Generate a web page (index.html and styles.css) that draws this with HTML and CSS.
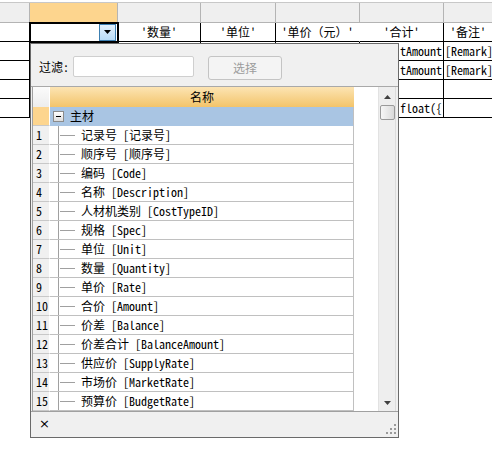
FILE: index.html
```html
<!DOCTYPE html>
<html>
<head>
<meta charset="utf-8">
<link rel="stylesheet" href="styles.css">
</head>
<body>
<div class="page">
  <div class="sheet">
    <div class="hc"></div><div class="hc hsel"></div><div class="hc"></div><div class="hc"></div><div class="hc"></div><div class="hc"></div><div class="hc"></div>

    <div class="r1 r1-first"></div>
    <div class="r1 cur"><span class="dd"><svg width="7" height="4" viewBox="0 0 7 4"><path d="M0 0H7L3.5 4Z" fill="#000"/></svg></span></div>
    <div class="r1">'数量'</div>
    <div class="r1">'单位'</div>
    <div class="r1 soft">'单价（元）'</div>
    <div class="r1">'合计'</div>
    <div class="r1">'备注'</div>

    <div class="c"></div><div class="c"></div><div class="c"></div><div class="c"></div><div class="c"></div><div class="c rt">tAmount</div><div class="c lt">[Remark]</div>
    <div class="c"></div><div class="c"></div><div class="c"></div><div class="c"></div><div class="c"></div><div class="c rt">tAmount</div><div class="c lt">[Remark]</div>
    <div class="c"></div><div class="c"></div><div class="c"></div><div class="c"></div><div class="c"></div><div class="c rt"></div><div class="c lt"></div>
    <div class="c"></div><div class="c"></div><div class="c"></div><div class="c"></div><div class="c"></div><div class="c rt">float({</div><div class="c lt"></div>
  </div>

  <div class="popup">
    <div class="filter">
      <span class="flabel">过滤:</span>
      <span class="finput"></span>
      <span class="fbtn">选择</span>
    </div>
    <div class="grid">
      <div class="cols">
        <div class="row head"><div class="rh rh-head"></div><div class="dc dc-head">名称</div></div>
        <div class="row group"><div class="rh rh-group"></div><div class="dc dc-group"><span class="minus"></span><span class="gtext">主材</span></div></div>
        <div class="row"><div class="rh">1</div><div class="dc"><span class="tree"></span>记录号 [记录号]</div></div>
        <div class="row"><div class="rh">2</div><div class="dc"><span class="tree"></span>顺序号 [顺序号]</div></div>
        <div class="row"><div class="rh">3</div><div class="dc"><span class="tree"></span>编码 [Code]</div></div>
        <div class="row"><div class="rh">4</div><div class="dc"><span class="tree"></span>名称 [Description]</div></div>
        <div class="row"><div class="rh">5</div><div class="dc"><span class="tree"></span>人材机类别 [CostTypeID]</div></div>
        <div class="row"><div class="rh">6</div><div class="dc"><span class="tree"></span>规格 [Spec]</div></div>
        <div class="row"><div class="rh">7</div><div class="dc"><span class="tree"></span>单位 [Unit]</div></div>
        <div class="row"><div class="rh">8</div><div class="dc"><span class="tree"></span>数量 [Quantity]</div></div>
        <div class="row"><div class="rh">9</div><div class="dc"><span class="tree"></span>单价 [Rate]</div></div>
        <div class="row"><div class="rh">10</div><div class="dc"><span class="tree"></span>合价 [Amount]</div></div>
        <div class="row"><div class="rh">11</div><div class="dc"><span class="tree"></span>价差 [Balance]</div></div>
        <div class="row"><div class="rh">12</div><div class="dc"><span class="tree"></span>价差合计 [BalanceAmount]</div></div>
        <div class="row"><div class="rh">13</div><div class="dc"><span class="tree"></span>供应价 [SupplyRate]</div></div>
        <div class="row"><div class="rh">14</div><div class="dc"><span class="tree"></span>市场价 [MarketRate]</div></div>
        <div class="row"><div class="rh">15</div><div class="dc"><span class="tree"></span>预算价 [BudgetRate]</div></div>
      </div>
      <div class="filler"></div>
      <div class="vscroll">
        <svg class="arr" width="7" height="4" viewBox="0 0 7 4"><path d="M3.5 0L7 4H0Z" fill="#404040"/></svg>
        <span class="thumb"></span>
        <span class="track"></span>
        <svg class="arr" width="7" height="4" viewBox="0 0 7 4"><path d="M0 0H7L3.5 4Z" fill="#404040"/></svg>
      </div>
    </div>
    <div class="footer">
      <span class="close">×</span>
      <svg class="grip" width="10" height="10" viewBox="0 0 10 10">
        <rect x="8" y="0" width="2" height="2" fill="#9a9a9a"/>
        <rect x="4" y="4" width="2" height="2" fill="#9a9a9a"/>
        <rect x="8" y="4" width="2" height="2" fill="#9a9a9a"/>
        <rect x="0" y="8" width="2" height="2" fill="#9a9a9a"/>
        <rect x="4" y="8" width="2" height="2" fill="#9a9a9a"/>
        <rect x="8" y="8" width="2" height="2" fill="#9a9a9a"/>
      </svg>
    </div>
  </div>
</div>
</body>
</html>
```

FILE: styles.css
```css
html, body {
  margin: 0;
  padding: 0;
  background: #fff;
}
body {
  width: 492px;
  height: 453px;
  overflow: hidden;
  font-family: "Noto Sans Mono CJK SC", "Noto Sans CJK SC", monospace;
  font-size: 12px;
  color: #000;
}
.page {
  position: relative;
  width: 492px;
  height: 453px;
}
.sheet {
  display: grid;
  grid-template-columns: 30px 88px 83px 75px 84px 84px 49px;
  grid-template-rows: 20px 19px 19px 19px 19px 19px;
  margin-top: 2px;
  border-top: 1px solid #c8c8c8;
  width: 493px;
}
.sheet > div {
  box-sizing: border-box;
  white-space: nowrap;
  overflow: hidden;
  line-height: 18px;
}
.hc {
  background: #efefef;
  border-right: 1px solid #b4b4b4;
  border-bottom: 1px solid #b4b4b4;
}
.hc.hsel {
  background: #fdd58e;
}
.r1 {
  border-right: 1px solid #000;
  border-bottom: 1px solid #000;
  text-align: center;
}
.r1.r1-first {
  border-right: none;
}
.r1.soft {
  border-right-color: #fff;
}
.r1.cur {
  position: relative;
  z-index: 1;
  outline: 2px solid #000;
  outline-offset: -1px;
  display: flex;
  justify-content: flex-end;
  align-items: center;
}
.dd {
  width: 15px;
  height: 15px;
  margin-right: 1px;
  border: 1px solid #3c7fb1;
  background: linear-gradient(#e4f1fc, #b9dbf6);
  display: flex;
  align-items: center;
  justify-content: center;
}
.c {
  border-right: 1px solid #000;
  border-bottom: 1px solid #000;
}
.c.rt {
  text-align: right;
  padding-right: 1px;
}
.c.lt {
  padding-left: 1px;
}

.popup {
  position: absolute;
  left: 30px;
  top: 41px;
  width: 367px;
  height: 393px;
  border: 1px solid #6a6a6a;
  background: #f0f0f0;
  z-index: 2;
  display: flex;
  flex-direction: column;
}
.filter {
  box-sizing: border-box;
  height: 43px;
  border-bottom: 1px solid #a9a9a9;
  display: flex;
  align-items: flex-start;
  padding: 12px 0 0 8px;
}
.flabel {
  line-height: 21px;
  width: 34px;
}
.finput {
  box-sizing: border-box;
  width: 121px;
  height: 21px;
  background: #fff;
  border: 1px solid #cfcfcf;
  border-radius: 2px;
}
.fbtn {
  box-sizing: border-box;
  margin-left: 14px;
  width: 74px;
  height: 24px;
  border: 1px solid #c4c4c4;
  border-radius: 3px;
  background: #f4f4f4;
  color: #9c9c9c;
  text-align: center;
  line-height: 22px;
}
.grid {
  margin-left: 1px;
  width: 364px;
  height: 324px;
  box-sizing: border-box;
  border-left: 1px solid #a0a0a0;
  border-right: 1px solid #dcdcdc;
  background: #fff;
  display: flex;
}
.cols {
  width: 321px;
  display: flex;
  flex-direction: column;
}
.row {
  display: grid;
  grid-template-columns: 17px 304px;
  height: 19px;
}
.row.head {
  height: 20px;
}
.rh {
  box-sizing: border-box;
  background: #f0f0f0;
  border-right: 1px solid #fff;
  border-bottom: 1px solid #c8c8c8;
  padding-left: 3px;
  line-height: 18px;
}
.rh.rh-head {
  background: linear-gradient(#fbfbfb, #ededed);
  border-bottom: none;
}
.rh.rh-group {
  background: #fdd58e;
}
.dc {
  box-sizing: border-box;
  border-right: 1px solid #c0c0c0;
  border-bottom: 1px solid #c0c0c0;
  display: flex;
  align-items: center;
  white-space: nowrap;
  overflow: hidden;
  line-height: 18px;
}
.dc.dc-head {
  background: linear-gradient(#fce4b3, #f3c46a);
  justify-content: center;
  border-bottom: none;
  border-right: none;
}
.dc.dc-group {
  background: #a9c5e3;
  border-bottom-color: #a9c5e3;
}
.minus {
  box-sizing: border-box;
  width: 11px;
  height: 11px;
  margin-left: 3px;
  border: 1px solid #8c8c8c;
  background: linear-gradient(#ffffff, #dcdcdc);
  position: relative;
}
.minus::after {
  content: "";
  position: absolute;
  left: 2px;
  top: 4px;
  width: 5px;
  height: 1px;
  background: #000;
}
.gtext {
  margin-left: 6px;
}
.tree {
  align-self: stretch;
  width: 16px;
  margin-left: 8px;
  margin-right: 6px;
  border-left: 1px solid #a0a0a0;
  position: relative;
}
.tree::after {
  content: "";
  position: absolute;
  left: 1px;
  right: 0;
  top: 9px;
  height: 1px;
  background: #a0a0a0;
}
.filler {
  width: 24px;
}
.vscroll {
  width: 17px;
  background: #eeeeee;
  border-left: 1px solid #e2e2e2;
  box-sizing: border-box;
  display: flex;
  flex-direction: column;
  align-items: center;
}
.arr {
  display: block;
  flex: none;
  margin: 8px 0 6px;
}
.thumb {
  box-sizing: border-box;
  width: 15px;
  height: 15px;
  border: 1px solid #9a9a9a;
  border-radius: 2px;
  background: linear-gradient(90deg, #f6f6f6, #dadada);
  flex: none;
}
.track {
  flex: 1;
}
.footer {
  box-sizing: border-box;
  height: 26px;
  border-top: 1px solid #a0a0a0;
  display: flex;
  align-items: flex-end;
  justify-content: space-between;
  padding: 0 2px 2px 8px;
}
.close {
  font-family: "DejaVu Sans", sans-serif;
  font-size: 13px;
  line-height: 18px;
  margin-bottom: 2px;
}
.grip {
  display: block;
  margin-bottom: 1px;
}
```
